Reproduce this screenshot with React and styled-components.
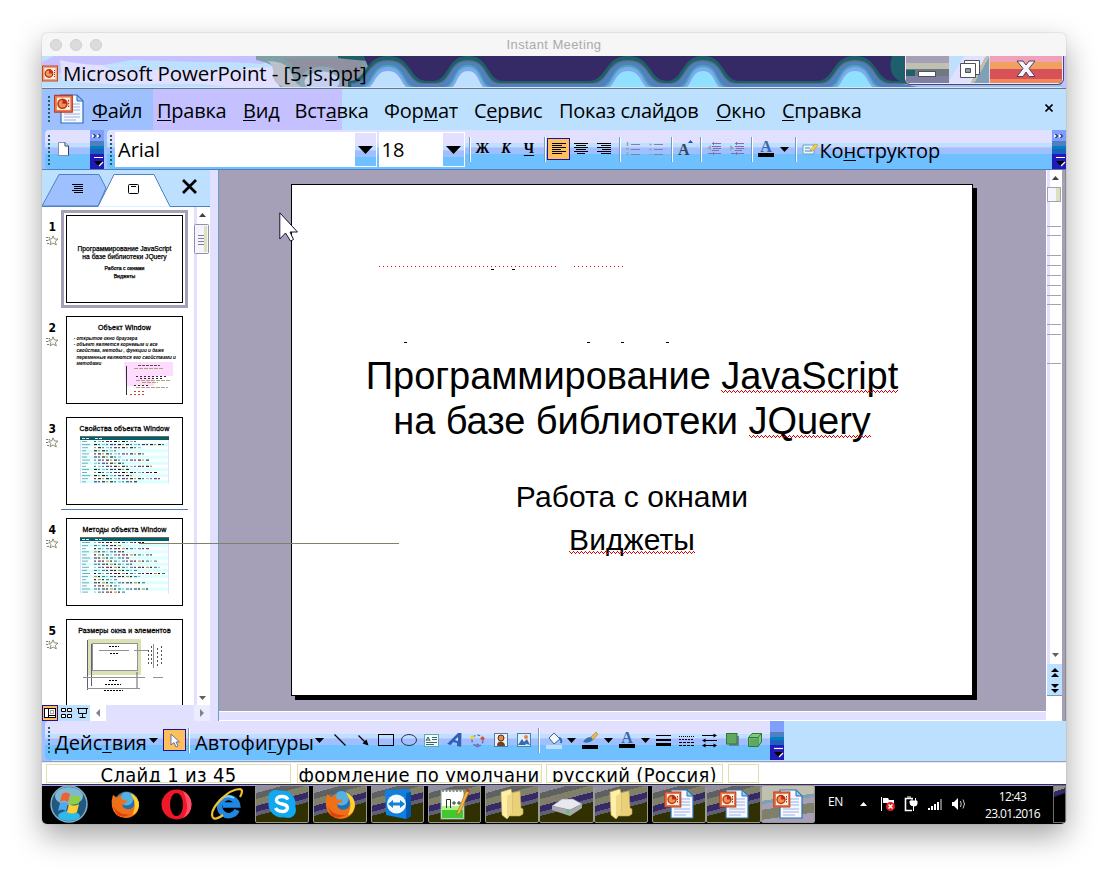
import React from 'react';
import styled, { createGlobalStyle, css } from 'styled-components';

const Global = createGlobalStyle`
  * { box-sizing: border-box; }
  html, body { margin: 0; background: #fff; }
  body { width: 1108px; height: 874px; overflow: hidden; font-family: "Open Sans", "Noto Sans", sans-serif; color: #000; }
  svg { display: block; flex: none; }
  u { text-decoration: underline 1px; text-underline-offset: 2px; text-decoration-skip-ink: none; }
`;

const barFill = css`
  background: linear-gradient(#e2e0ff 0 13px, #bde0ff 13px 17px, #c5c0ff 17px 18px, #9fc0ff 18px 24px, #6fc0ff 24px);
`;

const Desktop = styled.div`
  padding: 33px 42px;
  height: 874px;
`;
const Window = styled.div`
  width: 1024px;
  height: 791px;
  border-radius: 5px;
  overflow: hidden;
  display: flex;
  flex-direction: column;
`;
const Shadow = styled.div`
  width: 1024px;
  height: 791px;
  border-radius: 5px;
  box-shadow: 0 0 1px rgba(0, 0, 0, 0.5), 0 12px 30px rgba(0, 0, 0, 0.36);
`;
const MacBar = styled.div`
  flex: none;
  height: 23px;
  background: #f6f6f6;
  display: grid;
  grid-template-columns: 72px 1fr 80px;
  align-items: center;
  padding-left: 8px;
`;
const Lights = styled.div`
  display: flex;
  gap: 8px;
`;
const Light = styled.i`
  width: 12px;
  height: 12px;
  border-radius: 50%;
  background: #dcdcdc;
  border: 1px solid #cfcfcf;
`;
const MacTitle = styled.div`
  text-align: center;
  font: 13px/22px "Liberation Sans", Arial, sans-serif;
  color: #ababab;
  letter-spacing: 0.4px;
  padding-top: 1px;
`;

const AeroBar = styled.div`
  flex: none;
  height: 33px;
  position: relative;
  display: flex;
  border-bottom: 1px solid #5c7f86;
  background: #bde0ff;
  overflow: hidden;
`;
const AeroBackdrop = styled.svg`
  position: absolute;
  inset: 0;
`;
const AeroTitle = styled.div`
  position: relative;
  flex: 1;
  display: flex;
  align-items: center;
  gap: 5px;
  height: 33px;
  font-size: 20.5px;
  line-height: 33px;
  letter-spacing: ${(p) => p.$track}px;
  white-space: nowrap;
  padding-top: 2px;
`;
const CaptionButtons = styled.div`
  position: relative;
  display: flex;
  width: 158px;
  height: 28px;
  margin-right: 3px;
  border: 1px solid #e8e8ff;
  border-top: 0;
  border-radius: 0 0 5px 5px;
  outline: 1px solid #4a4a5c;
  overflow: hidden;
`;
const CaptionButton = styled.div`
  width: ${(p) => p.$w}px;
  height: 28px;
  display: grid;
  place-items: center;
  padding-bottom: ${(p) => p.$lift || 0}px;
  background: ${(p) => p.$bg};
  & + & { border-left: 1px solid #d8d8e8; }
`;

const MenuRow = styled.div`
  flex: none;
  height: 41px;
  display: flex;
  align-items: center;
  padding-left: 6px;
  background: linear-gradient(90deg, #9fc0ff 0 111px, #c5c0ff 111px 300px, #bde0ff 300px);
`;
const Grip = styled.i`
  flex: none;
  width: 2px;
  height: ${(p) => p.$h || 30}px;
  background: repeating-linear-gradient(#1d606c 0 2px, transparent 2px 4px);
`;
const MenuItems = styled.div`
  flex: 1;
  display: flex;
  gap: 16px;
  margin-left: 8px;
  padding-top: 2px;
  font-size: 20px;
  line-height: 24px;
`;
const MenuItem = styled.span`
  width: ${(p) => p.$w}px;
  letter-spacing: -0.25px;
  white-space: nowrap;
`;
const MenuClose = styled.div`
  width: 36px;
  padding: 0 0 4px 15px;
`;

const ToolRow = styled.div`
  flex: none;
  height: 40px;
  display: flex;
  background: #9fc0ff;
  border-bottom: 1px solid #5080c0;
`;
const Toolbar = styled.div`
  ${barFill}
  flex: ${(p) => (p.$w ? 'none' : 1)};
  width: ${(p) => p.$w}px;
  margin-left: ${(p) => p.$ml || 0}px;
  height: 39px;
  display: flex;
  align-items: center;
  border-radius: 4px 0 0 4px;
  padding-left: 3px;
`;
const Overflow = styled.div`
  flex: none;
  width: 14px;
  height: 39px;
  background: linear-gradient(#7f9fff 0 11px, #5080c0 11px 16px, #0080c0 16px 19px, #1d60c0 19px 24px, #2018b8 24px);
`;
const Combo = styled.div`
  flex: none;
  width: ${(p) => p.$w}px;
  height: 35px;
  margin-left: ${(p) => p.$ml}px;
  background: #fff;
  display: flex;
  justify-content: space-between;
  font-size: 20px;
  line-height: 33px;
  padding: 1px 1px 1px 3px;
`;
const ComboArrow = styled.div`
  ${barFill}
  width: 21px;
  height: 33px;
  display: grid;
  place-items: center;
`;
const Tool = styled.div`
  flex: none;
  width: ${(p) => p.$w}px;
  height: ${(p) => p.$h || 22}px;
  margin-left: ${(p) => p.$ml || 0}px;
  margin-top: -1px;
  display: grid;
  place-items: center;
  ${(p) => p.$on && css`background: #ffc05c; border: 1px solid #20109f;`}
`;
const Glyph = styled.span`
  font: ${(p) => (p.$italic ? 'italic ' : '')}bold 14px/16px "Liberation Serif", serif;
  padding-bottom: 1px;
`;
const Separator = styled.i`
  flex: none;
  width: 2px;
  height: 25px;
  margin-left: ${(p) => p.$ml}px;
  background: linear-gradient(90deg, #6f9fc0 50%, #fff 50%);
`;
const ToolText = styled.span`
  flex: none;
  width: ${(p) => p.$w}px;
  margin-left: ${(p) => p.$ml}px;
  margin-top: ${(p) => p.$mt || 0}px;
  font-size: 20px;
  line-height: 24px;
  letter-spacing: ${(p) => p.$track || 0}px;
  white-space: nowrap;
`;

const Main = styled.div`
  flex: none;
  height: 551px;
  display: flex;
  background: #a5a0b8;
`;
const LeftPane = styled.div`
  width: 168px;
  display: flex;
  flex-direction: column;
  background: #fff;
`;
const PaneBody = styled.div`
  height: 498px;
  display: flex;
`;
const ThumbList = styled.div`
  width: 152px;
  height: 498px;
  padding-top: 3px;
  overflow: hidden;
`;
const ThumbRow = styled.div`
  height: 101px;
  display: flex;
`;
const ThumbMeta = styled.div`
  width: 19px;
  padding-top: 10px;
  font: bold 12px/15px "DejaVu Sans Condensed", "DejaVu Sans", sans-serif;
  text-align: right;
  padding-right: 5px;
  display: flex;
  flex-direction: column;
  align-items: flex-end;
`;
const ThumbStar = styled.div`
  margin: 0 -3px 0 0;
`;
const ThumbFrame = styled.div`
  flex: none;
  width: 127px;
  height: 98px;
  border: 3px solid ${(p) => (p.$on ? '#a5a0b8' : 'transparent')};
  padding: 2px;
`;
const Thumb = styled.div`
  width: 117px;
  height: 88px;
  border: 1px solid #000;
  background: #fff;
  overflow: hidden;
  display: flex;
  flex-direction: column;
  align-items: center;
  font: bold 7px/8px "Liberation Sans", Arial, sans-serif;
  white-space: nowrap;
  text-align: center;
`;
const ThumbTitle = styled.div`
  margin-top: 7px;
  margin-bottom: 3px;
  letter-spacing: 0.18px;
  font-weight: normal;
  -webkit-text-stroke: 0.3px #000;
`;
const ThumbCover = styled.div`
  padding-top: 29px;
  font-weight: normal;
  -webkit-text-stroke: 0.25px #000;
  font-size: 6.7px;
  line-height: 8px;
  small { display: block; font-size: 5.2px; line-height: 8px; margin-top: 3px; }
  small + small { margin-top: 0; }
`;
const ThumbBullets = styled.ul`
  width: 108px;
  margin: 1px 0 0;
  padding: 0 0 0 6px;
  text-align: left;
  list-style: '· ';
  font: italic bold 4.7px/6.2px "Liberation Sans", Arial, sans-serif;
`;
const ThumbInset = styled.svg`
  align-self: flex-end;
  margin: -5px 8px 0 0;
`;

const VScroll = styled.div`
  width: 16px;
  background: linear-gradient(90deg, #e2e0ff 3px, #fff 3px);
  display: flex;
  flex-direction: column;
  align-items: center;
`;
const Spacer = styled.div`
  flex: 1;
`;
const ViewRow = styled.div`
  height: 16px;
  display: flex;
  background: #e2e0ff;
`;
const ViewButton = styled.div`
  width: 16px;
  height: 16px;
  display: grid;
  place-items: center;
  background: ${(p) => (p.$on ? '#ffc05c' : '#bde0ff')};
  border: ${(p) => (p.$on ? '1px solid #20109f' : '0')};
`;
const ScrollCap = styled.div`
  width: 16px;
  background: ${(p) => p.$bg || '#fff'};
  display: grid;
  place-items: center;
`;
const Splitter = styled.div`
  width: 9px;
  background: #e2e0ff;
  border-right: 1px solid #6f9fb8;
`;
const Stage = styled.div`
  width: 827px;
  display: flex;
  flex-direction: column;
`;
const StageBody = styled.div`
  height: 541px;
  padding: 14px 0 0 72px;
`;
const StageFoot = styled.div`
  height: 10px;
  background: #e2e0ff;
  border-top: 1px solid #fff;
  border-bottom: 1px solid #fff;
`;
const Slide = styled.div`
  width: 682px;
  height: 512px;
  border: 1px solid #000;
  background: #fff;
  box-shadow: 4px 4px 0 #000;
  position: relative;
  text-align: center;
  font-family: "Liberation Sans", Arial, sans-serif;
`;
const SlideTitle = styled.div`
  padding-top: 169px;
  font-size: 38px;
  line-height: 45px;
  letter-spacing: -0.05px;
`;
const SlideSubtitle = styled.div`
  margin-top: 31px;
  font-size: 30px;
  line-height: 43px;
  letter-spacing: 0.08px;
`;
const Squiggle = styled.span`
  position: relative;
  &::after {
    content: '';
    position: absolute;
    left: 0;
    right: 0;
    top: ${(p) => p.$top}px;
    height: 3px;
    background:
      repeating-linear-gradient(90deg, #e00000 0 1px, transparent 1px 4px) 0 0 / 100% 1px no-repeat,
      repeating-linear-gradient(90deg, transparent 0 1px, #e00000 1px 2px) 0 1px / 100% 1px no-repeat,
      repeating-linear-gradient(90deg, transparent 0 2px, #e00000 2px 3px, transparent 3px 4px) 0 2px / 100% 1px no-repeat;
  }
`;
const Residue = styled.svg`
  position: absolute;
  left: 0;
  top: 0;
`;
const RightRail = styled.div`
  width: 20px;
  display: flex;
`;
const RailTrack = styled.div`
  width: 16px;
  border-left: 1px solid #fff;
  background: #fff;
`;
const RailEdge = styled.div`
  width: 4px;
  background: linear-gradient(90deg, #a5a0b8 3px, #8a8a8a 3px);
`;

const DrawRow = styled.div`
  flex: none;
  height: 41px;
  display: flex;
  background: linear-gradient(90deg, #9fc0ff 10px, #bde0ff 10px);
  border-bottom: 1px solid #8fa0c0;
  padding-left: 3px;
`;
const StatusRow = styled.div`
  flex: none;
  height: 22px;
  display: flex;
  background: #fff;
  border-top: 1px solid #f4e4f0;
  padding: 1px 0 0 4px;
`;
const StatusCell = styled.div`
  width: ${(p) => p.$w}px;
  height: 19px;
  margin-right: ${(p) => p.$gap || 0}px;
  border: 1px solid #dde0b0;
  overflow: hidden;
  display: flex;
  justify-content: center;
  font: 20px/21px "DejaVu Sans Condensed", "DejaVu Sans", sans-serif;
  letter-spacing: 0.3px;
  white-space: nowrap;
`;

const Taskbar = styled.div`
  flex: none;
  height: 40px;
  background: linear-gradient(#352a66 1px, #a5a0d8 1px 2px, #000 2px);
  display: flex;
  align-items: flex-start;
`;
const Quick = styled.div`
  width: ${(p) => p.$w}px;
  height: 40px;
  display: grid;
  place-items: center;
`;
const TaskButton = styled.div`
  width: ${(p) => p.$w}px;
  height: 38px;
  margin: 1px 0 0 ${(p) => p.$ml || 0}px;
  border: 1px solid #9a9a90;
  border-radius: 2px;
  display: grid;
  place-items: center;
  background: ${(p) =>
    p.$on
      ? 'linear-gradient(172deg, #c0c0b0 0 34%, #7fa0b0 34% 42%, #a5a0b8 42% 55%, #80806a 55% 78%, #a5a0b8 78%)'
      : 'linear-gradient(165deg, #8f8fa0 0 14%, #5f6060 14% 26%, #80806a 26% 40%, #352a66 40% 52%, #5f6078 52% 60%, #303000 60%)'};
`;
const Tray = styled.div`
  display: flex;
  flex: 1;
  height: 40px;
  align-items: center;
  color: #fff;
`;
const Language = styled.span`
  width: 32px;
  margin-left: 13px;
  margin-top: -4px;
  font: 12px/14px "Open Sans", sans-serif;
  letter-spacing: -0.3px;
`;
const TrayIcon = styled.div`
  width: ${(p) => p.$w}px;
`;
const Clock = styled.div`
  width: 76px;
  text-align: center;
  font: 12px/17px "Open Sans", sans-serif;
  letter-spacing: -0.6px;
  padding: 1px 0 0 1px;
`;
const ShowDesktop = styled.div`
  width: 13px;
  height: 38px;
  border: 1px solid #70706a;
  background: linear-gradient(160deg, #909090 0 15%, #352a66 15% 25%, #000 30%);
`;

const Caret = ({ w = 9 }) => (
  <svg width={w} height={Math.ceil(w / 2)} viewBox="0 0 10 5" preserveAspectRatio="none">
    <path d="M0 0H10L5 5Z" />
  </svg>
);

const bumps = [[346, 40], [426, 36], [586, 40], [661, 37], [813, 39]];
const bell = (x, w, top, base) =>
  `M${x - w} 33V${base}C${x - w * 0.5} ${base} ${x - w * 0.62} ${top} ${x} ${top}C${x + w * 0.62} ${top} ${x + w * 0.5} ${base} ${x + w} ${base}V33Z`;
const layers = [
  [0, 0, 25, '#1d606c'],
  [3, 4, 27, '#58707f'],
  [4, 5.5, 28, '#5080c0'],
  [11, 9, 31, '#48a8b8'],
  [13, 11, 32, '#80a8f0'],
  [16, 15, 33, '#90e0ff'],
];

const Backdrop = () => (
  <AeroBackdrop width="1024" height="32">
    <rect width="1024" height="32" fill="#bde0ff" />
    <path d="M0 6L12 0H240L220 8L90 4L20 16L0 24Z" fill="#c5c0ff" />
    <path d="M18 4C60 14 110 6 150 12S240 2 262 20L250 32H190C150 22 80 34 20 24Z" fill="#e2e0ff" />
    <path d="M60 9C100 14 160 2 218 8L200 14H70Z" fill="#bde0ff" />
    <path d="M214 0H330V32H240C226 22 250 12 214 4Z" fill="#80a0a8" />
    <path d="M226 5C262 6 240 32 270 32H244C222 24 238 16 226 5Z" fill="#bcc0cc" />
    <path d="M240 2H320V32H262C250 24 262 12 240 2Z" fill="#8f90a0" />
    <ellipse cx="280" cy="26" rx="20" ry="13" fill="#c5d0f0" stroke="#8fa8b8" strokeWidth="5" />
    <path d="M296 0H340V8C324 4 310 4 296 2Z" fill="#1d606c" />
    <path d="M322 0H1024V32H340C332 24 326 12 322 0Z" fill="#352a66" />
    {layers.map(([inset, top, base, fill], i) => (
      <g key={fill} fill={fill}>
        {i < 3 && <rect x="340" y={base} width="684" height="10" />}
        {bumps.map(([x, w]) => (
          <path key={x} d={bell(x, w - inset, top, base)} fill={i === 5 && x < 500 ? '#bde0ff' : fill} />
        ))}
      </g>
    ))}
    <path d="M850 0C846 14 850 24 862 26V0Z" fill="#1d606c" />
    <path d="M862 28H1024V32H880Z" fill="#9fc0ff" />
    <path d="M0 31.500H1024" stroke="#e2e0ff" />
    <rect x="1020" width="4" height="32" fill="#c5c0ff" />
  </AeroBackdrop>
);

const PptBadge = () => (
  <svg width="16" height="17" viewBox="0 0 16 17">
    <rect x="0.500" y="1" width="15" height="15" fill="#f0a080" stroke="#c04820" />
    <rect x="2.500" y="3" width="11" height="11" fill="#fff0e0" />
    <circle cx="7" cy="8.500" r="3.800" fill="#f09858" stroke="#a03018" strokeWidth="1.200" />
    <path d="M7 8.500V4.500A4 4 0 0 1 11 8.500Z" fill="#c83018" />
    <path d="M12.500 5V12" stroke="#a03018" strokeDasharray="1 1" />
  </svg>
);

const PptDoc = ({ big }) => (
  <svg width="30" height="30" viewBox="0 0 30 30">
    <path d="M7 1H23L29 7V29H7Z" fill="#f4f8ff" stroke="#3070b8" strokeWidth="1.200" />
    <path d="M23 1V7H29Z" fill="#90c8f0" stroke="#3070b8" />
    <path d="M17 10H26M17 13H26M17 16H26M10 20H26M10 23H26M10 26H22" stroke="#9fb0e0" />
    <g transform={big ? 'translate(-0.500 -2) scale(1.12)' : undefined}>
      <rect x="0.800" y="3" width="16" height="15" fill="#e87850" stroke="#b83818" />
      <rect x="3" y="5" width="12" height="11" fill="#fff0e0" />
      <circle cx="8" cy="10.500" r="4" fill="#f09050" stroke="#b83818" strokeWidth="1.400" />
      <path d="M8 10.500V6.500A4 4 0 0 1 12 10.500Z" fill="#c02818" />
      <path d="M13.500 7V14" stroke="#a03018" strokeDasharray="1.500 1" />
    </g>
  </svg>
);

const OverflowIcon = ({ chevrons }) => (
  <svg width="14" height="39">
    {chevrons && <path d="M2 4L4.500 6L2 8ZM7 4L9.500 6L7 8Z" fill="#fff" />}
    {chevrons && <path d="M3.500 4L5.500 6L3.500 8M8.500 4L10.500 6L8.500 8" fill="none" stroke="#000" />}
    <path d="M4 27.500H13" stroke="#fff" strokeWidth="1.200" />
    <path d="M4 31H13L8.500 36Z" fill="#000" />
    <path d="M9 36L13 32" stroke="#fff" strokeWidth="1.200" />
  </svg>
);

const alignments = {
  left: [[0, 14], [0, 10], [0, 14], [0, 9], [0, 14], [0, 10]],
  center: [[0, 14], [2, 10], [0, 14], [2, 10], [0, 14], [3, 8]],
  right: [[0, 14], [4, 10], [0, 14], [5, 9], [0, 14], [4, 10]],
};
const AlignIcon = ({ kind }) => (
  <svg width="14" height="13">
    {alignments[kind].map(([x, w], i) => (
      <rect key={i} x={x} y={i * 2} width={w} height="1" fill="#000" />
    ))}
  </svg>
);
const ListIcon = ({ numbered }) => (
  <svg width="15" height="14" stroke="#7f80b8">
    <path d="M5 2.500H14M5 7.500H14M5 12.500H14" />
    <path d={numbered ? 'M1.500 0V4M0 7H3M1.500 10V14' : 'M0.500 2.500H3M0.500 7.500H3M0.500 12.500H3'} stroke="#88a8a8" strokeWidth="1.500" strokeDasharray={numbered ? 'none' : '2 1'} />
  </svg>
);
const IndentIcon = ({ right }) => (
  <svg width="16" height="14" stroke="#7f70b0">
    <path d="M6 1.500H15M6 4.500H15M8 6.500H15M6 8.500H13M2 11.500H15" />
    <path d="M7.500 0V14" strokeDasharray="1 1" />
    <path d={right ? 'M1 3L5 6L1 9Z' : 'M5 3L1 6L5 9Z'} fill="#90b0b0" stroke="none" />
  </svg>
);
const Star = () => (
  <svg width="13" height="11" viewBox="0 0 13 11" fill="none" stroke="#80806a">
    <path d="M7 0.800L8.400 3.900L12 4.100L9.300 6.400L10.300 9.900L7 8L4 9.900L4.900 6.400L2.800 4.100L5.700 3.900Z" fill="#fff" strokeWidth="0.900" />
    <path d="M0 2.500H4M0 5.500H3M1 8.500H3.500" strokeDasharray="2 0.700" />
  </svg>
);
const FontColor = () => (
  <svg width="16" height="18">
    <text x="8" y="12" textAnchor="middle" fontFamily="Liberation Serif" fontWeight="bold" fontSize="16" fill="#3868a8">A</text>
    <rect y="13" width="16" height="4" />
  </svg>
);

const inks = ['#000', '#008080', '#202078', '#c08020', '#80c0e0', '#800020', '#000', '#407070'];
const ThumbTable = ({ rows, step, seed }) => (
  <svg width="89" height={rows * step + 5}>
    <rect width="89" height="4" fill="#00606c" />
    <path d="M0 0.500H89" stroke="#706858" />
    <path d="M2 2.500H9M15 2.500H23" stroke="#d8f0f0" strokeDasharray="3 1" />
    <path d={`M0.500 4V${rows * step + 4}M88.500 4V${rows * step + 4}`} stroke="#e2e0ff" />
    {Array.from({ length: rows }, (_, r) => {
      const y = 4 + r * step;
      const n = 6 + ((r * 7 + seed * 5) % 13);
      return (
        <g key={r}>
          {r % 2 === 1 && <rect x="1" y={y} width="87" height={step} fill="#dcffff" />}
          <rect x="2" y={y + 1} width={4 + ((r * 3 + seed) % 5)} height="1" fill="#70b0b8" />
          {Array.from({ length: n }, (_, i) => (
            <rect key={i} x={14 + i * 4} y={y + 1} width={2 + ((i + r) % 2)} height="1" fill={inks[(i * 3 + r * 5 + seed) % 8]} />
          ))}
        </g>
      );
    })}
  </svg>
);
const SizeDiagram = () => (
  <svg width="90" height="60" fill="none">
    <path d="M10 3H59V35H10Z" stroke="#dde0b0" strokeWidth="4" />
    <rect x="12.500" y="5.500" width="45" height="27" stroke="#9090a0" />
    <path d="M7.500 2V52M11.500 6V48M57 34V50" stroke="#606070" />
    <path d="M3 39.500H65M73 39.500H83M7 50.500H60M19 12.500H49M54 12.500H69M73.500 6V30" stroke="#909098" />
    <path d="M29 8.500H39M30 15.500H38M29 42.500H37M25 46.500H41M24 52.500H43" stroke="#000" strokeDasharray="2 1" />
    <path d="M68.500 12V26M71.500 8V26M77.500 10V28M81.500 8V28" stroke="#505050" strokeDasharray="2 2" />
  </svg>
);

const Orb = () => (
  <svg width="38" height="38" viewBox="0 0 38 38">
    <circle cx="19" cy="19" r="18" fill="#205880" stroke="#80b0c8" strokeWidth="1.500" />
    <ellipse cx="19" cy="11" rx="14" ry="9" fill="#80b8d0" />
    <ellipse cx="19" cy="31" rx="11" ry="5" fill="#30b8e8" />
    <path d="M12 9Q16 6 20 9L18 17Q14 14 10 17Z" fill="#f06030" />
    <path d="M21 10Q26 13 31 10L29 18Q24 21 19 18Z" fill="#90d040" />
    <path d="M10 18Q14 16 18 18L16 26Q12 23 8 26Z" fill="#50a8f0" />
    <path d="M19 19Q24 22 29 19L27 27Q22 30 17 27Z" fill="#ffd030" />
  </svg>
);
const Firefox = ({ s = 30 }) => (
  <svg width={s} height={s} viewBox="0 0 30 30">
    <circle cx="16" cy="14" r="12.500" fill="#2070b8" />
    <circle cx="16" cy="9" r="7" fill="#58b0e0" />
    <path d="M2 5L6 8Q9 4 12 5Q9 8 12 10L17 11Q16 14 12 14Q11 19 17 20Q24 20 24 14Q24 7 20 3Q29 7 29 16Q28 28 15 29Q3 28 1 17Q0 11 2 5Z" fill="#f07018" />
    <path d="M20 3Q29 7 29 16Q28 23 22 26Q26 17 24 11Z" fill="#ffd030" />
    <path d="M2 16Q8 27 20 25Q12 30 6 25Z" fill="#e04010" />
  </svg>
);
const Opera = () => (
  <svg width="31" height="31" viewBox="0 0 31 31">
    <ellipse cx="15.500" cy="15.500" rx="15" ry="15" fill="#f01828" />
    <path d="M22 2A15 15 0 0 1 22 29Q27 22 26 15T22 2Z" fill="#ff5068" />
    <ellipse cx="15.500" cy="15.500" rx="6.500" ry="11.500" fill="#000" />
  </svg>
);
const Explorer = () => (
  <svg width="34" height="34" viewBox="0 0 34 34" fill="none">
    <path d="M27 23A9 9 0 1 1 27.500 18H13" stroke="#2088e0" strokeWidth="5.500" />
    <path d="M11 12Q17 7 24 11" stroke="#80d0ff" strokeWidth="2" />
    <path d="M3 31C-2 22 18 2 30 2Q34 3 30 10" stroke="#f0c030" strokeWidth="2.200" />
    <path d="M3 31Q6 33 13 28" stroke="#f0c030" strokeWidth="2.200" />
  </svg>
);
const Skype = () => (
  <svg width="32" height="32" viewBox="0 0 32 32">
    <circle cx="16" cy="16" r="13.500" fill="#10a8f0" />
    <circle cx="10" cy="10" r="8" fill="#10a8f0" />
    <circle cx="22" cy="22" r="8" fill="#10a8f0" />
    <path d="M22 11.500Q20 8 15.500 8.500Q10 9 10.500 12.500Q11 15 16 16Q21.500 17 21.500 20Q21 23.500 16 23.500Q11.500 23.500 9.500 20" fill="none" stroke="#fff" strokeWidth="3.400" />
  </svg>
);
const TeamViewer = () => (
  <svg width="28" height="32" viewBox="0 0 28 32">
    <path d="M1 2L25 1L27 4V28L22 31L2 27Z" fill="#1080e0" />
    <path d="M22 5L27 4V28L22 31Z" fill="#0058b0" />
    <circle cx="12.500" cy="16" r="9.500" fill="#f4f8ff" />
    <path d="M4 16L9 12V14.500H16V12L21 16L16 20V17.500H9V20Z" fill="#1080d8" />
  </svg>
);
const Notepad = () => (
  <svg width="30" height="32" viewBox="0 0 30 32">
    <rect x="1" y="2" width="23" height="29" fill="#fff" stroke="#80a080" />
    <rect x="2" y="22" width="21" height="8" fill="#40c830" />
    <rect x="2" y="18" width="21" height="4" fill="#b0f080" />
    <path d="M2 3H24" stroke="#909090" strokeDasharray="2 1.500" strokeWidth="2" />
    <path d="M6.500 20V11.500H10.500V20M12 15H16M14 13V17M17 15H21M19 13V17" stroke="#204020" fill="none" />
    <path d="M17 25L26 3L29 4L20 25L17 27Z" fill="#f0b838" stroke="#a06018" strokeWidth="0.600" />
    <path d="M26 3L27 1L30 2L29 4Z" fill="#d03030" />
  </svg>
);
const Folder = () => (
  <svg width="24" height="32" viewBox="0 0 24 32">
    <path d="M11 5L20 3L21 20L23 21V26L20 28H10Z" fill="#ead078" stroke="#c0a850" strokeWidth="0.600" />
    <path d="M1 4L11 1L12 5V24L7 31L2 27Z" fill="#fff0a8" stroke="#c0a850" strokeWidth="0.600" />
    <path d="M7 8L12 5V25L7 31Z" fill="#f0d888" />
  </svg>
);
const Drive = () => (
  <svg width="32" height="26" viewBox="0 -6 32 26">
    <path d="M1 9L11 2H22L31 7L19 13Z" fill="#e8e8f0" stroke="#909098" strokeWidth="0.600" />
    <path d="M1 9L19 13L31 7V11L19 19L1 13Z" fill="#a8a8b0" />
    <circle cx="17" cy="15" r="1.500" fill="#30e030" />
  </svg>
);

const menu = [
  [<><u>Ф</u>айл</>, 49], [<><u>П</u>равка</>, 70], [<><u>В</u>ид</>, 35.500], [<>Вст<u>а</u>вка</>, 73.500], [<>Фор<u>м</u>ат</>, 74],
  [<>С<u>е</u>рвис</>, 69], [<>Показ слай<u>д</u>ов</>, 141], [<><u>О</u>кно</>, 50], [<><u>С</u>правка</>, 80],
];

const ThumbItem = ({ n, on, children }) => (
  <ThumbRow>
    <ThumbMeta>{n}<ThumbStar><Star /></ThumbStar></ThumbMeta>
    <ThumbFrame $on={on}><Thumb>{children}</Thumb></ThumbFrame>
  </ThumbRow>
);

const LineOverlay = styled.svg`
  position: absolute;
  left: 61px;
  top: 508px;
`;
const Pointer = styled.svg`
  position: absolute;
  left: 279px;
  top: 212px;
`;

export default function App() {
  return (
    <Desktop>
      <Global />
      <Shadow>
        <Window>
          <MacBar>
            <Lights><Light /><Light /><Light /></Lights>
            <MacTitle>Instant Meeting</MacTitle>
          </MacBar>
          <AeroBar>
            <Backdrop />
            <AeroTitle $track={-0.12}><PptBadge />Microsoft PowerPoint - [5-js.ppt]</AeroTitle>
            <CaptionButtons>
              <CaptionButton $w={43} $bg="linear-gradient(90deg, #1d606c 9px, transparent 9px) 0 14px / 100% 6px no-repeat, linear-gradient(#a5a0b8 0 7px, #c0c0b0 7px 13px, #707880 13px 20px, #8080a0 20px)">
                <svg width="18" height="14"><rect x="0.500" y="8.500" width="17" height="5" fill="#fff" stroke="#50505c" /></svg>
              </CaptionButton>
              <CaptionButton $w={41} $lift={2} $bg="linear-gradient(120deg, #bde0ff 0 25%, #e2e0ff 25% 65%, #c0c0b0 65% 72%, #80a0b8 72%)">
                <svg width="20" height="18" stroke="#50505c">
                  <path d="M4.500 0.500H19.500V14.500H4.500Z" fill="#fff" />
                  <path d="M0.500 3.500H15.500V17.500H0.500Z" fill="#fff" />
                  <path d="M5.500 8.500H10.500V12.500H5.500Z" fill="#80a0a8" />
                </svg>
              </CaptionButton>
              <CaptionButton $w={73} $lift={2} $bg="linear-gradient(#f0a0b8 0 6px, #f0a060 6px 13px, #d85058 13px 23px, #f08858 23px)">
                <svg width="20" height="18"><path d="M1 1H7L10 5L13 1H19L13 8.500L19 16.500H13L10 12L7 16.500H1L7 8.500Z" fill="#f4f4ff" stroke="#50405c" /></svg>
              </CaptionButton>
            </CaptionButtons>
          </AeroBar>
          <MenuRow>
            <Grip $h={27} />
            <Tool $w={31} $h={31} $ml={3}><PptDoc big /></Tool>
            <MenuItems>{menu.map(([t, w], i) => <MenuItem key={i} $w={w}>{t}</MenuItem>)}</MenuItems>
            <MenuClose><svg width="8" height="8"><path d="M0.500 0.500L7.500 7.500M7.500 0.500L0.500 7.500" stroke="#000" strokeWidth="1.600" /></svg></MenuClose>
          </MenuRow>
          <ToolRow>
            <Toolbar $w={45} $ml={3}>
              <Grip />
              <Tool $w={12} $ml={7}>
                <svg width="11" height="14"><path d="M0.500 0.500H7L10.500 4V13.500H0.500Z" fill="#fff" stroke="#8090b0" /><path d="M7 0.500V4H10.500V13.500" fill="none" stroke="#304060" /></svg>
              </Tool>
            </Toolbar>
            <Overflow><OverflowIcon chevrons /></Overflow>
            <Toolbar $ml={3}>
              <Grip />
              <Combo $w={262} $ml={3}>Arial<ComboArrow><Caret w={15} /></ComboArrow></Combo>
              <Combo $w={86} $ml={1.500}>18<ComboArrow><Caret w={15} /></ComboArrow></Combo>
              <Separator $ml={4} />
              <Tool $w={20} $ml={2}><Glyph>Ж</Glyph></Tool>
              <Tool $w={20} $ml={3.500}><Glyph $italic>К</Glyph></Tool>
              <Tool $w={16} $ml={5}><Glyph><u>Ч</u></Glyph></Tool>
              <Separator $ml={6.500} />
              <Tool $w={23} $ml={1.500} $on><AlignIcon kind="left" /></Tool>
              <Tool $w={14} $ml={4}><AlignIcon kind="center" /></Tool>
              <Tool $w={14} $ml={9}><AlignIcon kind="right" /></Tool>
              <Separator $ml={7.500} />
              <Tool $w={15} $ml={5.500}><ListIcon numbered /></Tool>
              <Tool $w={15} $ml={8}><ListIcon /></Tool>
              <Separator $ml={7} />
              <Tool $w={18} $ml={4}>
                <svg width="18" height="18"><text x="1" y="15" fontFamily="Liberation Serif" fontWeight="bold" fontSize="16" fill="#304858">A</text><path d="M11 3L13.500 0L16 3Z" fill="#2050b0" /></svg>
              </Tool>
              <Separator $ml={5} />
              <Tool $w={16} $ml={4}><IndentIcon /></Tool>
              <Tool $w={16} $ml={7}><IndentIcon right /></Tool>
              <Separator $ml={6} />
              <Tool $w={16} $ml={5}><FontColor /></Tool>
              <Tool $w={9} $ml={6}><Caret /></Tool>
              <Separator $ml={5.500} />
              <Tool $w={17} $ml={4.500}>
                <svg width="16" height="12"><path d="M1 2H12V11H1Z" fill="#e8f8ff" stroke="#70a0c0" /><path d="M3 5H8M3 8H10" stroke="#5080c0" /><path d="M8 7L13 1L16 2L11 8Z" fill="#f8d040" stroke="#a08030" strokeWidth="0.500" /></svg>
              </Tool>
              <ToolText $w={124} $ml={1.500} $mt={3} $track={-0.15}>Ко<u>н</u>структор</ToolText>
            </Toolbar>
            <Overflow><OverflowIcon chevrons /></Overflow>
          </ToolRow>
          <Main>
            <LeftPane>
              <svg width="168" height="37">
                <rect width="168" height="37" fill="#bde0ff" />
                <path d="M0 36L17 4.500H57L64 18L56 36Z" fill="#9fc0ff" stroke="#5080c0" />
                <path d="M0 36.500H56L72 4.500H112L128 36.500H168" fill="#fff" stroke="#5080c0" />
                <path d="M30 14.500H41M32 16.500H41M32 18.500H41M30 20.500H41M32 22.500H41" stroke="#000" />
                <rect x="86.500" y="14.500" width="10" height="9" rx="1" fill="#fff" stroke="#000" />
                <path d="M89 16.500H94" stroke="#000" />
                <path d="M141 10L154 23M154 10L141 23" stroke="#000" strokeWidth="2.800" />
              </svg>
              <PaneBody>
                <ThumbList>
                  <ThumbItem n="1" on>
                    <ThumbCover>Программирование JavaScript<br />на базе библиотеки JQuery<small>Работа с окнами</small><small>Виджеты</small></ThumbCover>
                  </ThumbItem>
                  <ThumbItem n="2">
                    <ThumbTitle>Объект Window</ThumbTitle>
                    <ThumbBullets>
                      <li>открытое окно браузера</li>
                      <li>объект является корневым и все<br />свойства, методы , функции и даже<br />переменные являются его свойствами и<br />методами</li>
                    </ThumbBullets>
                    <ThumbInset width="50" height="34">
                      <path d="M0 0H49V14H30V24H2Z" fill="#ffdcff" />
                      <path d="M2.500 4V33" stroke="#303030" />
                      <path d="M14 3.500H36" stroke="#605040" strokeDasharray="3 1" />
                      <path d="M10 6.500H40M12 18.500H46M18 20.500H34M12 25.500H44" stroke="#b0a080" strokeDasharray="4 1" />
                      <path d="M12 14.500H44M16 16.500H40M10 23.500H24" stroke="#303030" strokeDasharray="2 2" />
                      <path d="M10 29.500H22M6 32.500H20" stroke="#d04040" strokeDasharray="2 2" />
                    </ThumbInset>
                  </ThumbItem>
                  <ThumbItem n="3">
                    <ThumbTitle>Свойства объекта Window</ThumbTitle>
                    <ThumbTable rows={14} step={3.100} seed={1} />
                  </ThumbItem>
                  <ThumbItem n="4">
                    <ThumbTitle>Методы объекта Window</ThumbTitle>
                    <ThumbTable rows={17} step={3.100} seed={4} />
                  </ThumbItem>
                  <ThumbItem n="5">
                    <ThumbTitle>Размеры окна и элементов</ThumbTitle>
                    <SizeDiagram />
                  </ThumbItem>
                </ThumbList>
                <VScroll>
                  <svg width="16" height="47">
                    <path d="M5 10L8.500 6L12 10Z" fill="#404048" />
                    <rect x="0.500" y="17.500" width="14" height="29" rx="1" fill="#f4f4ff" stroke="#9090a8" />
                    <rect x="10" y="19" width="3" height="26" fill="#dde0b8" />
                    <path d="M4 28.500H10M4 31.500H10M4 34.500H10M4 37.500H10" stroke="#808098" />
                  </svg>
                  <Spacer />
                  <svg width="16" height="12"><path d="M5 3H12L8.500 7Z" fill="#606058" /></svg>
                </VScroll>
              </PaneBody>
              <ViewRow>
                <ViewButton $on><svg width="12" height="10" fill="none" stroke="#000"><rect x="0.500" y="0.500" width="11" height="9" fill="#fff" /><path d="M4.500 0V10M5 7.500H11" /><rect x="6.500" y="2.500" width="3" height="3" stroke="#a5a0b8" /></svg></ViewButton>
                <ViewButton><svg width="11" height="10" fill="#fff" stroke="#000"><path d="M0.500 0.500H4.500V3.500H0.500ZM6.500 0.500H10.500V3.500H6.500ZM0.500 6.500H4.500V9.500H0.500ZM6.500 6.500H10.500V9.500H6.500Z" /></svg></ViewButton>
                <ViewButton><svg width="11" height="10" fill="none" stroke="#000"><path d="M0 0.500H11M1.500 1V5.500H9.500V1M5.500 6V9M2.500 9.500H8.500" /></svg></ViewButton>
                <ScrollCap><svg width="6" height="8"><path d="M5 0V8L1 4Z" fill="#808090" /></svg></ScrollCap>
                <Spacer />
                <ScrollCap $bg="#ececff"><svg width="6" height="8"><path d="M1 0V8L5 4Z" fill="#808090" /></svg></ScrollCap>
              </ViewRow>
            </LeftPane>
            <Splitter />
            <Stage>
              <StageBody>
                <Slide>
                  <SlideTitle>Программирование <Squiggle $top={35}>JavaScript</Squiggle><br />на базе библиотеки <Squiggle $top={35}>JQuery</Squiggle></SlideTitle>
                  <SlideSubtitle>Работа с окнами<br /><Squiggle $top={28}>Виджеты</Squiggle></SlideSubtitle>
                  <Residue width="680" height="510">
                    <path d="M87 81.500H265M282 81.500H332" stroke="#f00000" strokeDasharray="1 3" />
                    <path d="M199 84.500H202M220 84.500H223M112 157.500H115M295 157.500H298M329 157.500H332M374 157.500H377" stroke="#000" />
                  </Residue>
                </Slide>
              </StageBody>
              <StageFoot />
            </Stage>
            <RightRail>
              <RailTrack>
                <svg width="15" height="541">
                  <rect width="3" height="494" fill="#e2e0ff" />
                  <path d="M5 10L8.500 6L12 10Z" fill="#404048" />
                  <rect x="0.500" y="17.500" width="13" height="14" fill="#f4f4ff" stroke="#a5a0b8" />
                  <rect x="9" y="18" width="4" height="13" fill="#dde0b8" />
                  {[56, 65, 85, 95, 105, 115, 125, 134, 154, 164, 193].map((y) => <path key={y} d={`M0 ${y + 0.5}H14`} stroke="#a5a0b8" />)}
                  <path d="M5 483H12L8.500 487Z" fill="#606058" />
                  <rect y="494" width="15" height="31" fill="#bde0ff" />
                  <path d="M4 502L8 498L12 502ZM4 507L8 503L12 507ZM4 514L8 518L12 514ZM4 519L8 523L12 519Z" />
                  <path d="M0 525.500H15" stroke="#6f9fb8" />
                </svg>
              </RailTrack>
              <RailEdge />
            </RightRail>
          </Main>
          <DrawRow>
            <Toolbar $w={725}>
              <Grip $h={27} />
              <ToolText $w={93} $ml={5} $mt={4}>Дейс<u>т</u>вия</ToolText>
              <Tool $w={9} $ml={1}><Caret /></Tool>
              <Tool $w={23} $ml={5} $on><svg width="10" height="15"><path d="M1 1V12L4 9.500L6 14L8 13L6 9H9.500Z" fill="#fff" stroke="#6070a8" /></svg></Tool>
              <Separator $ml={2} />
              <ToolText $w={118} $ml={5} $mt={4}>Автофи<u>г</u>уры</ToolText>
              <Tool $w={9} $ml={2}><Caret /></Tool>
              <Tool $w={13} $ml={9}><svg width="12" height="12"><path d="M0.500 0.500L11.500 11.500" stroke="#000" strokeWidth="1.200" /></svg></Tool>
              <Tool $w={12} $ml={11}><svg width="11" height="11"><path d="M0.500 0.500L9 9" stroke="#000" strokeWidth="1.200" /><path d="M10.500 10.500L4.500 8.500L8.500 4.500Z" /></svg></Tool>
              <Tool $w={16} $ml={9}><svg width="16" height="12"><rect x="0.500" y="0.500" width="15" height="11" fill="none" stroke="#000" /></svg></Tool>
              <Tool $w={16} $ml={7}><svg width="16" height="12"><ellipse cx="8" cy="6" rx="7.500" ry="5.500" fill="none" stroke="#303050" /></svg></Tool>
              <Tool $w={15} $ml={7}><svg width="15" height="13"><rect x="0.500" y="0.500" width="14" height="12" fill="#e8fff8" stroke="#70a0b0" /><path d="M2 7L4 3L6 7M2.500 6H5.500M8 3.500H13M8 5.500H13M2 8.500H13M2 10.500H10" stroke="#305060" fill="none" strokeWidth="0.900" /></svg></Tool>
              <Tool $w={16} $ml={8}><svg width="16" height="15"><path d="M0 11L11 0H15V14L10 13V10L6 9L4 12Z" fill="#3060b8" /><path d="M8 7L11 4V8Z" fill="#d8e8ff" /><path d="M14.500 0V14" stroke="#90a8e0" /></svg></Tool>
              <Tool $w={15} $ml={7}><svg width="15" height="15"><circle cx="7.500" cy="7.500" r="5.500" fill="none" stroke="#4068b8" strokeWidth="1.200" strokeDasharray="3 2" /><circle cx="2.500" cy="4.500" r="2" fill="#f0d040" /><circle cx="12.500" cy="5.500" r="2" fill="#d85040" /><circle cx="7.500" cy="12.500" r="2" fill="#8070c0" /></svg></Tool>
              <Tool $w={14} $ml={9}><svg width="14" height="14"><rect x="0.500" y="0.500" width="13" height="13" fill="#f0f0ff" stroke="#5080a0" /><circle cx="7" cy="5" r="3" fill="#e09040" stroke="#503010" /><path d="M3 13Q3 8 7 8.500T11 13Z" fill="#704020" /></svg></Tool>
              <Tool $w={14} $ml={9}><svg width="14" height="14"><rect x="0.500" y="0.500" width="13" height="13" fill="#d8f0ff" stroke="#5080a0" /><path d="M1 12L5 6L9 12ZM6 10L10 6L13 12Z" fill="#3868b0" /><circle cx="9" cy="4" r="2" fill="#f08040" /></svg></Tool>
              <Separator $ml={7} />
              <Tool $w={17} $ml={5.500}><svg width="17" height="17"><path d="M3 6L8 1L14 7L8 12Z" fill="#f0f8ff" stroke="#506080" /><path d="M13 6Q16 7 15 11" fill="none" stroke="#3070c0" strokeWidth="2" /><rect y="13" width="16" height="4" fill="#bde0ff" /></svg></Tool>
              <Tool $w={9} $ml={4}><Caret /></Tool>
              <Tool $w={17} $ml={6}><svg width="17" height="17"><path d="M1 10Q4 5 9 5L11 8Q7 12 1 10Z" fill="#3870b8" /><path d="M9 5L14 0L16 2L11 8Z" fill="#e8b850" stroke="#907020" strokeWidth="0.500" /><rect y="13" width="16" height="4" /></svg></Tool>
              <Tool $w={9} $ml={5}><Caret /></Tool>
              <Tool $w={16} $ml={6}><FontColor /></Tool>
              <Tool $w={9} $ml={6}><Caret /></Tool>
              <Tool $w={15} $ml={6}><svg width="15" height="11"><path d="M0 0H15V1H0ZM0 4H15V6H0ZM0 8H15V11H0Z" /></svg></Tool>
              <Tool $w={15} $ml={8}><svg width="15" height="11"><path d="M0 1.500H15" stroke="#000" strokeDasharray="1 1" /><path d="M0 4.500H15" stroke="#000" strokeDasharray="2 1" /><path d="M0 7.500H15M0 10.500H15" stroke="#000" strokeDasharray="3 1" /></svg></Tool>
              <Tool $w={15} $ml={8}><svg width="15" height="15"><path d="M0 2.500H13M2 7.500H15M2 12.500H13" stroke="#000" /><path d="M11.500 0.500L15 2.500L11.500 4.500ZM3.500 5.500L0 7.500L3.500 9.500ZM3.500 10.500L0 12.500L3.500 14.500ZM11.500 10.500L15 12.500L11.500 14.500Z" /></svg></Tool>
              <Tool $w={14} $ml={9}><svg width="14" height="14"><rect x="3" y="3" width="10" height="10" fill="#7080a0" /><rect x="0.500" y="0.500" width="10.500" height="10.500" fill="#60a860" stroke="#307838" /></svg></Tool>
              <Tool $w={14} $ml={8.500}><svg width="14" height="14"><path d="M0.500 4.500L4 0.500H13.500V9L10 13.500H0.500Z" fill="#80c880" stroke="#307838" /><path d="M0.500 4.500H10V13.500M10 4.500L13.500 0.500" fill="none" stroke="#307838" /><rect x="1.500" y="5.500" width="8" height="7.500" fill="#60a860" /></svg></Tool>
            </Toolbar>
            <Overflow><OverflowIcon /></Overflow>
          </DrawRow>
          <StatusRow>
            <StatusCell $w={245} $gap={6}>Слайд 1 из 45</StatusCell>
            <StatusCell $w={245} $gap={4}>Оформление по умолчанию</StatusCell>
            <StatusCell $w={177} $gap={5}>русский (Россия)</StatusCell>
            <StatusCell $w={31} />
          </StatusRow>
          <Taskbar>
            <Quick $w={54}><Orb /></Quick>
            <Quick $w={58}><Firefox s={29} /></Quick>
            <Quick $w={45}><Opera /></Quick>
            <Quick $w={56}><Explorer /></Quick>
            <TaskButton $w={54}><Skype /></TaskButton>
            <TaskButton $w={54} $ml={4}><Firefox s={31} /></TaskButton>
            <TaskButton $w={53} $ml={4}><TeamViewer /></TaskButton>
            <TaskButton $w={53} $ml={4}><Notepad /></TaskButton>
            <TaskButton $w={54} $ml={4}><Folder /></TaskButton>
            <TaskButton $w={55}><Drive /></TaskButton>
            <TaskButton $w={54}><Folder /></TaskButton>
            <TaskButton $w={54} $ml={4}><PptDoc /></TaskButton>
            <TaskButton $w={55}><PptDoc /></TaskButton>
            <TaskButton $w={54} $on><PptDoc /></TaskButton>
            <Tray>
              <Language>EN</Language>
              <TrayIcon $w={20}><svg width="7" height="4"><path d="M0 4H7L3.500 0Z" fill="#fff" /></svg></TrayIcon>
              <TrayIcon $w={24}><svg width="16" height="16"><path d="M1.500 1V15" stroke="#fff" /><path d="M3 2H8L9 4H14V9H8L7 7H3Z" fill="#fff" /><circle cx="10.500" cy="10.500" r="4.500" fill="#e02020" /><path d="M8.500 8.500L12.500 12.500M12.500 8.500L8.500 12.500" stroke="#fff" strokeWidth="1.400" /></svg></TrayIcon>
              <TrayIcon $w={24}><svg width="15" height="16" fill="none" stroke="#fff"><path d="M9 2.500H1.500V14.500H8" strokeWidth="1.600" /><path d="M3 1H7" /><path d="M6 5H13V8Q13 10 10 10Q6 10 6 7Z" fill="#fff" /><path d="M8 2V5M11.500 2V5M9.500 10V15" /></svg></TrayIcon>
              <TrayIcon $w={24}><svg width="14" height="11" fill="#fff"><path d="M0 9H2V11H0ZM3 7H5V11H3ZM6 5H8V11H6ZM9 3H11V11H9Z" /><path d="M12 0H14V11H12Z" fill="#707070" /></svg></TrayIcon>
              <TrayIcon $w={22}><svg width="14" height="14"><path d="M0 5H2L6 1V13L2 9H0Z" fill="#fff" /><path d="M8.500 4Q10 7 8.500 10M11 2.500Q14 7 11 11.500" fill="none" stroke="#d0d0d0" /></svg></TrayIcon>
              <Clock>12:43<br />23.01.2016</Clock>
              <Spacer />
              <ShowDesktop />
            </Tray>
          </Taskbar>
        </Window>
      </Shadow>
      <LineOverlay width="340" height="40">
        <path d="M0 1.500H127" stroke="#5080b8" />
        <path d="M78 35.500H338" stroke="#80806a" />
      </LineOverlay>
      <Pointer width="20" height="30">
        <path d="M0.800 0.800V27L6.500 21L11.500 29L14.500 27.500L11 20H18.500Z" fill="#fff" stroke="#181030" />
      </Pointer>
    </Desktop>
  );
}
